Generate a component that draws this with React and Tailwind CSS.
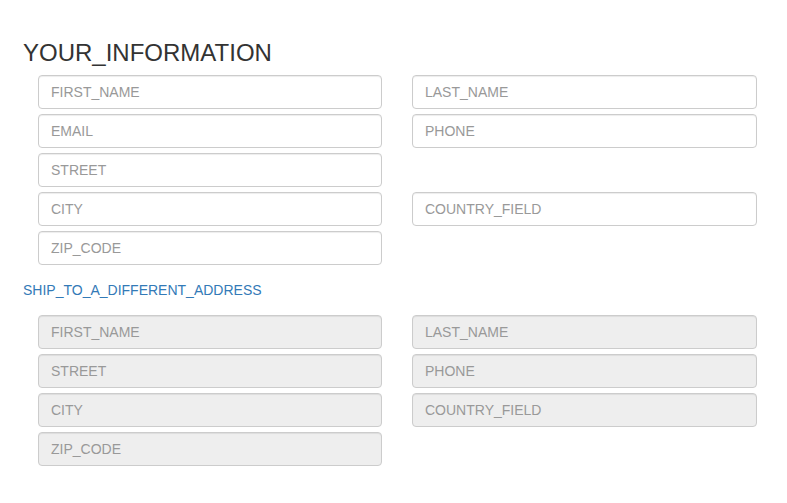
const mine = [
	["FIRST_NAME", "LAST_NAME"],
	["EMAIL", "PHONE"],
	["STREET", null],
	["CITY", "COUNTRY_FIELD"],
	["ZIP_CODE", null],
];

const shipping = [
	["FIRST_NAME", "LAST_NAME"],
	["STREET", "PHONE"],
	["CITY", "COUNTRY_FIELD"],
	["ZIP_CODE", null],
];

function Field({ label, disabled }) {
	if (!label) return <div />;
	return (
		<input
			type="text"
			placeholder={label}
			disabled={disabled}
			className={
				"h-[34px] w-full rounded-[4px] border border-[#ccc] px-3 text-[14px] text-[#555] placeholder:text-[#999] shadow-[inset_0_1px_1px_rgba(0,0,0,0.075)] outline-none " +
				(disabled ? "bg-[#eee]" : "bg-white")
			}
		/>
	);
}

function FieldGrid({ rows, disabled }) {
	return (
		<div className="ml-[15px] grid w-[719px] grid-cols-[344px_345px] gap-x-[30px] gap-y-[5px]">
			{rows.map(([a, b], i) => (
				<div key={i} className="contents">
					<Field label={a} disabled={disabled} />
					<Field label={b} disabled={disabled} />
				</div>
			))}
		</div>
	);
}

export default function App() {
	return (
		<div className="min-h-[503px] bg-white pl-[23px] pt-[40px] font-['Liberation_Sans',Arial,sans-serif] text-[#333]">
			<h3 className="mb-[9px] text-[24px] leading-[26px] font-normal">
				YOUR_INFORMATION
			</h3>
			<FieldGrid rows={mine} />
			<a
				href="#"
				className="mt-[15px] mb-[15px] block text-[14px] leading-[20px] text-[#337ab7]"
			>
				SHIP_TO_A_DIFFERENT_ADDRESS
			</a>
			<FieldGrid rows={shipping} disabled />
		</div>
	);
}
